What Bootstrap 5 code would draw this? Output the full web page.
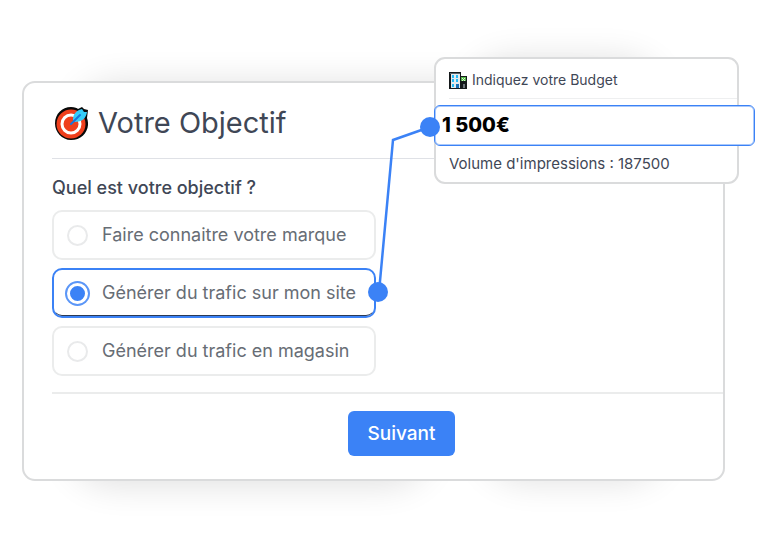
<!DOCTYPE html>
<html lang="fr">
<head>
<meta charset="utf-8">
<meta name="viewport" content="width=device-width, initial-scale=1">
<title>Votre Objectif</title>
<link href="https://cdn.jsdelivr.net/npm/bootstrap@5.3.0/dist/css/bootstrap.min.css" rel="stylesheet">
<style>
  :root { --accent: #3b82f6; --ink: #3f4756; --line: #e9eaed; --edge: #dadbdc; }
  body { font-family: Inter, "Liberation Sans", sans-serif; color: var(--ink); background: #fff; }
  .stage { padding: 81px 43px 52px 22px; isolation: isolate; overflow: hidden; }
  .glow { position: absolute; z-index: -1; background: #000; border-radius: 50px; filter: blur(18px); opacity: .13; }
  .glow-top { left: 76px; top: 84px; width: 544px; height: 80px; }
  .glow-popup { left: 470px; top: 60px; width: 190px; height: 80px; }
  .glow-left { left: 70px; top: 400px; width: 360px; height: 84px; }
  .glow-right { left: 484px; top: 400px; width: 180px; height: 80px; }
  .goal-card { border: 2px solid var(--edge); border-radius: 13px; padding-left: 28px; }
  .goal-head { height: 76px; padding: 5px 0 0 3px; gap: 10px; border-bottom: 1px solid #dfe1e6; }
  .goal-title { font-size: 29px; line-height: 36px; font-weight: 400; }
  .goal-form { padding-top: 17px; }
  .question { font-size: 18px; line-height: 24px; font-weight: 500; margin-bottom: 10px; }
  .choices { width: 324px; gap: 8px; margin-bottom: 16px; }
  .choice { height: 50px; padding: 0 13px 2px; gap: 14px; border: 2px solid #ebecec; border-radius: 10px; font-size: 18px; color: #676d75; cursor: pointer; }
  .choice .form-check-input { width: 21px; height: 21px; margin: 2px 0 0; border: 2px solid #e9eaeb; }
  .choice:has(:checked) { border-color: var(--accent); box-shadow: inset 0 -2px 0 -1px #2b3a55; }
  .choice .form-check-input:checked { border: 3px solid #fff; background: var(--accent); box-shadow: 0 0 0 2px #5b96f7; }
  .goal-foot { border-top: 2px solid #ebecec; padding: 17px 0 23px 28px; }
  .btn-next { --bs-btn-bg: var(--accent); --bs-btn-color: #fff; --bs-btn-hover-bg: #2f72e4; --bs-btn-hover-color: #fff;
    --bs-btn-font-size: 19px; --bs-btn-font-weight: 500; --bs-btn-border-width: 0; --bs-btn-border-radius: 6px;
    --bs-btn-padding-x: 20px; --bs-btn-padding-y: 8px; line-height: 29px; }
  .budget { left: 434px; top: 57px; width: 305px; border: 2px solid var(--edge); border-radius: 11px; font-size: 14px; line-height: 20px; }
  .budget-head { margin-left: 13px; padding: 11px 0 8px; gap: 5px; border-bottom: 1px solid #eeeff0; }
  .budget-input { width: 321px; height: 41px; margin: 6px 0 0 -2px; padding: 0 7px 2px; border: 1px solid var(--accent); box-shadow: inset 0 0 0 1px #a9c8fb; border-radius: 6px; font-size: 20px; font-weight: 800; color: #000; }
  .budget-note { padding: 8px 13px; font-size: 15px; }
  .link-line { left: 360px; top: 110px; pointer-events: none; }
</style>
</head>
<body>
<main class="stage position-relative">
  <div class="glow glow-top"></div>
  <div class="glow glow-popup"></div>
  <div class="glow glow-left"></div>
  <div class="glow glow-right"></div>

  <form class="goal-card bg-white">
    <header class="goal-head d-flex align-items-center">
      <svg width="33" height="33" viewBox="0 0 33 33" aria-hidden="true">
        <path d="M16 0C20 0 22 1 23 2L27 0L29 2L33 3L32 11C36 22 28 33 16 33C7 33 0 25 0 16.500C0 7 7 0 16 0Z" fill="#080808"/>
        <circle cx="16" cy="17" r="14.500" fill="#ef3f1d"/>
        <circle cx="16" cy="17" r="9" fill="#ef3f1d" stroke="#fff" stroke-width="3"/>
        <circle cx="16" cy="17" r="4.500" fill="#ef3f1d"/>
        <path d="M18 13C18 8 20 4 27 2L29 5L32 5C31 11 28 15 19 15Z" fill="#36cdf8"/>
        <path d="M16 17L25 8" stroke="#1676dc" stroke-width="2" stroke-linecap="round"/>
      </svg>
      <h1 class="goal-title mb-0">Votre Objectif</h1>
    </header>

    <fieldset class="goal-form">
      <legend class="question">Quel est votre objectif ?</legend>
      <div class="choices d-flex flex-column">
        <label class="choice d-flex align-items-center" for="goal-brand">
          <input class="form-check-input" type="radio" name="goal" id="goal-brand">
          <span>Faire connaitre votre marque</span>
        </label>
        <label class="choice d-flex align-items-center" for="goal-site">
          <input class="form-check-input" type="radio" name="goal" id="goal-site" checked>
          <span>Générer du trafic sur mon site</span>
        </label>
        <label class="choice d-flex align-items-center" for="goal-shop">
          <input class="form-check-input" type="radio" name="goal" id="goal-shop">
          <span>Générer du trafic en magasin</span>
        </label>
      </div>
    </fieldset>

    <footer class="goal-foot d-flex justify-content-center">
      <button class="btn btn-next" type="button">Suivant</button>
    </footer>
  </form>

  <section class="budget position-absolute bg-white">
    <div class="budget-head d-flex align-items-center">
      <svg width="18" height="17" viewBox="0 0 18 17" aria-hidden="true">
        <path d="M0 0H12V4H18V17H0Z" fill="#15191b"/>
        <path d="M2 2H11V16H2Z" fill="#e3eaee"/>
        <path d="M1 1H11V2H1Z" fill="#58636a"/>
        <path d="M3 3H5V6H3ZM7 3H9V6H7ZM3 7H5V10H3ZM7 7H9V10H7Z" fill="#25b9f4"/>
        <path d="M3 12H5V15H3Z" fill="#25b9f4"/>
        <path d="M7 12H10V16H7Z" fill="#176fb5"/>
        <path d="M12 5H17V9H12Z" fill="#54b848"/>
        <path d="M13 6L16 9M16 6L13 9" stroke="#d9f5d2"/>
        <path d="M14 12H16V16H14Z" fill="#6c7479"/>
      </svg>
      <label for="budget">Indiquez votre Budget</label>
    </div>
    <input class="budget-input d-block bg-white" type="text" id="budget" value="1 500€">
    <div class="budget-note">Volume d'impressions : 187500</div>
  </section>

  <svg class="link-line position-absolute" width="84" height="196" viewBox="0 0 84 196" aria-hidden="true">
    <path d="M19 182L33 30L70 17" fill="none" stroke="#3b82f6" stroke-width="2.500"/>
    <circle cx="18" cy="182" r="10" fill="#3b82f6"/>
    <circle cx="70" cy="17" r="10" fill="#3b82f6"/>
  </svg>
</main>
</body>
</html>
